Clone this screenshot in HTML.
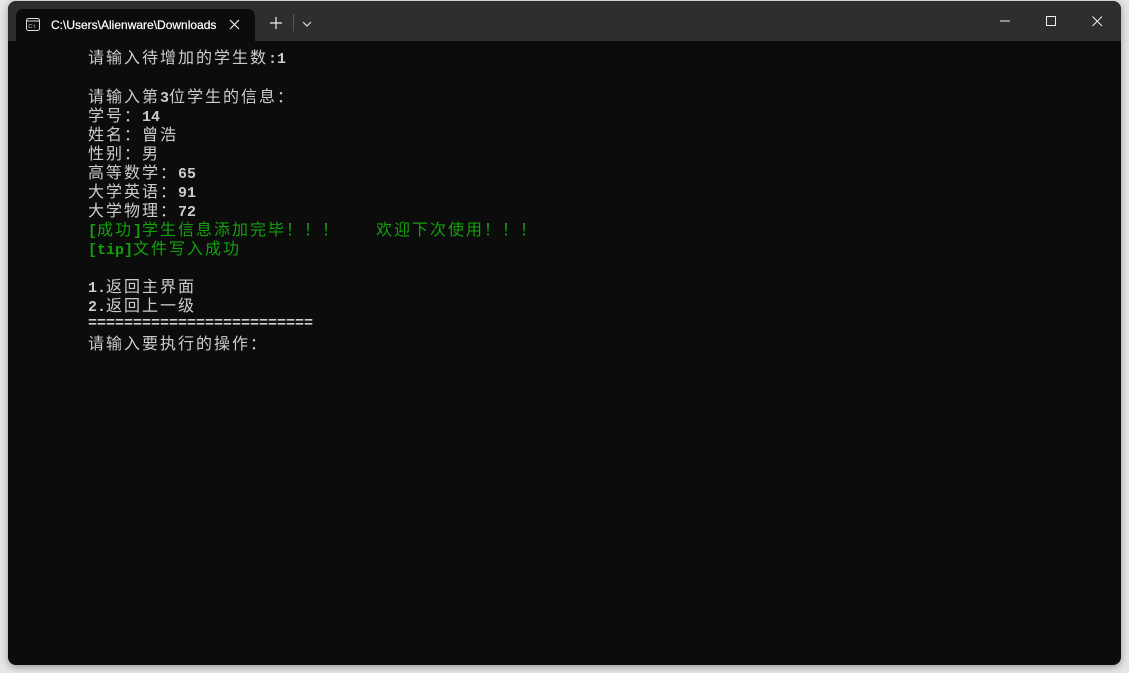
<!DOCTYPE html>
<html><head><meta charset="utf-8">
<style>
html,body{margin:0;padding:0;width:1129px;height:673px;overflow:hidden;background:#e6e6e6;}
.win{position:absolute;left:8px;top:1px;width:1113px;height:664px;background:#0c0c0c;border-radius:8px;overflow:hidden;box-shadow:0 2px 8px rgba(0,0,0,.35);}
.title{position:absolute;left:0;top:0;width:100%;height:40px;background:#2e2e2e;}
.tab{position:absolute;left:8px;top:8px;width:239px;height:32px;background:#0c0c0c;border-radius:7px 7px 0 0;}
.tabtxt{position:absolute;left:35px;top:9px;font:12px "Liberation Sans",sans-serif;color:#fff;white-space:nowrap;width:165px;overflow:hidden;-webkit-text-stroke:0.2px #fff;}
.t{position:absolute;left:80px;font-family:"Liberation Mono","Noto Sans CJK SC",monospace;font-size:15px;font-weight:bold;color:#cccccc;white-space:pre;line-height:19px;}
.c{font-family:"Noto Sans CJK SC",sans-serif;font-size:16px;letter-spacing:2px;font-weight:normal;}
.g{color:#13a10e;}
</style></head><body>
<div class="win">
 <div class="title">
  <div class="tab">
   <svg style="position:absolute;left:10px;top:9px" width="14" height="13" viewBox="0 0 14 13"><rect x="0.5" y="0.5" width="13" height="12" rx="2" fill="none" stroke="#ddd"/><line x1="0.5" y1="3" x2="13.5" y2="3" stroke="#ddd"/><text x="2.3" y="10" font-size="5.5" fill="#ddd" font-family="Liberation Sans">C:\</text></svg>
   <div class="tabtxt">C:\Users\Alienware\Downloads</div>
   <svg style="position:absolute;left:213px;top:10px" width="11" height="11"><path d="M1 1L10 10M10 1L1 10" stroke="#eee" stroke-width="1.2"/></svg>
  </div>
  <svg style="position:absolute;left:262px;top:16px" width="12" height="12"><path d="M6 0V12M0 6H12" stroke="#eee" stroke-width="1.2"/></svg>
  <div style="position:absolute;left:285px;top:13px;width:1px;height:17px;background:#555"></div>
  <svg style="position:absolute;left:294px;top:20px" width="10" height="6"><path d="M1 1L5 5L9 1" stroke="#ddd" fill="none" stroke-width="1.2"/></svg>
  <svg style="position:absolute;left:992px;top:19px" width="12" height="2"><path d="M0 1H10" stroke="#eee" stroke-width="1"/></svg>
  <svg style="position:absolute;left:1038px;top:15px" width="11" height="11"><rect x="0.5" y="0.5" width="9" height="9" fill="none" stroke="#eee"/></svg>
  <svg style="position:absolute;left:1084px;top:15px" width="11" height="11"><path d="M0.5 0.5L10 10M10 0.5L0.5 10" stroke="#eee" stroke-width="1"/></svg>
 </div>
 <div class="t" style="top:46px"><span class="c">请输入待增加的学生数</span>:1</div>
 <div class="t" style="top:85px"><span class="c">请输入第</span>3<span class="c">位学生的信息：</span></div>
 <div class="t" style="top:104px"><span class="c">学号：</span>14</div>
 <div class="t" style="top:123px"><span class="c">姓名：曾浩</span></div>
 <div class="t" style="top:142px"><span class="c">性别：男</span></div>
 <div class="t" style="top:161px"><span class="c">高等数学：</span>65</div>
 <div class="t" style="top:180px"><span class="c">大学英语：</span>91</div>
 <div class="t" style="top:199px"><span class="c">大学物理：</span>72</div>
 <div class="t g" style="top:218px">[<span class="c">成功</span>]<span class="c">学生信息添加完毕！！！</span></div>
 <div class="t g" style="top:218px;left:368px"><span class="c">欢迎下次使用！！！</span></div>
 <div class="t g" style="top:237px">[tip]<span class="c">文件写入成功</span></div>
 <div class="t" style="top:275px">1.<span class="c">返回主界面</span></div>
 <div class="t" style="top:294px">2.<span class="c">返回上一级</span></div>
 <div class="t" style="top:313px">=========================</div>
 <div class="t" style="top:332px"><span class="c">请输入要执行的操作：</span></div>
</div>
</body></html>
